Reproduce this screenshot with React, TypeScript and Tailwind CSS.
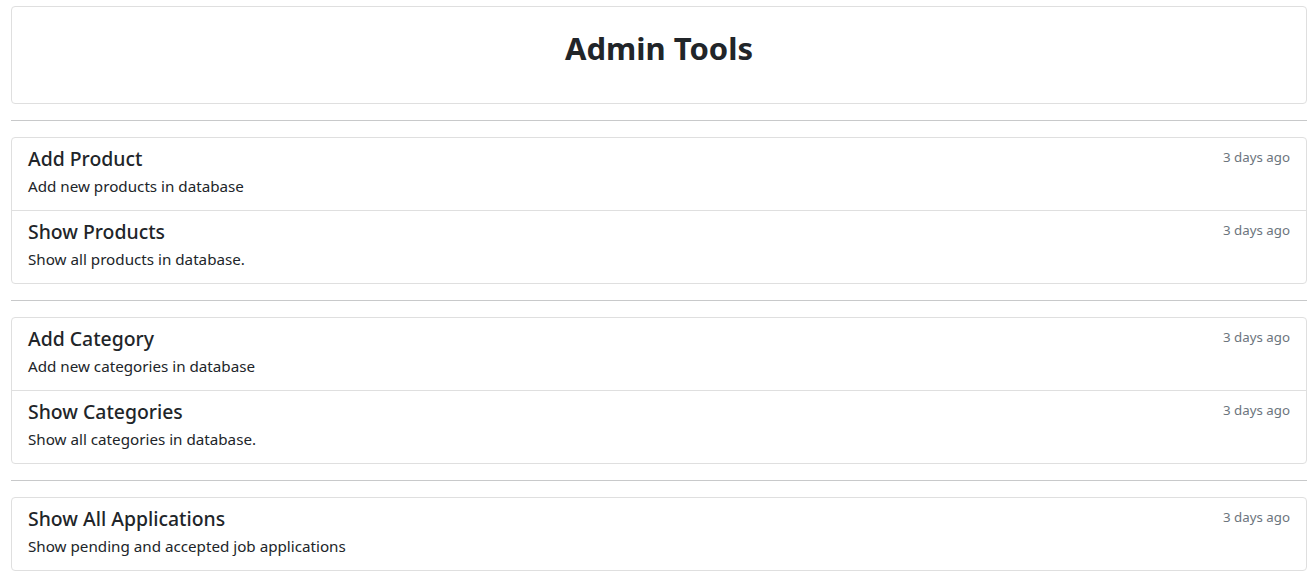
const items = [
  [
    { title: "Add Product", text: "Add new products in database" },
    { title: "Show Products", text: "Show all products in database." },
  ],
  [
    { title: "Add Category", text: "Add new categories in database" },
    { title: "Show Categories", text: "Show all categories in database." },
  ],
  [{ title: "Show All Applications", text: "Show pending and accepted job applications" }],
];

export default function App() {
  return (
    <div
      className="min-h-screen bg-white pl-[11px] pr-[8px] pt-[6px] text-[#212529]"
      style={{ fontFamily: '"Noto Sans", "Open Sans", sans-serif' }}
    >
      {/* Header */}
      <div className="flex h-[98px] items-start justify-center rounded-[4px] border border-[#dfdfdf] pt-[22px]">
        <h1 className="text-[31px] font-bold leading-[38px]">Admin Tools</h1>
      </div>

      {items.map((group, i) => (
        <div key={i}>
          <hr className="my-4 border-t border-[#c8c9ca]" />
          <div className="rounded-[4px] border border-[#dfdfdf]">
            {group.map((item, j) => (
              <div
                key={j}
                className={
                  "px-4 py-2 " + (j > 0 ? "border-t border-[#dfdfdf]" : "")
                }
              >
                <div className="flex items-start justify-between">
                  <h5 className="mb-1 pt-[2px] text-[19.4px] font-medium leading-[22px]">{item.title}</h5>
                  <small className="pt-[2px] text-[13.3px] leading-[18px] text-[#6c757d]">3 days ago</small>
                </div>
                <p className="mb-1 text-[15.2px] leading-6">{item.text}</p>
              </div>
            ))}
          </div>
        </div>
      ))}
    </div>
  );
}
